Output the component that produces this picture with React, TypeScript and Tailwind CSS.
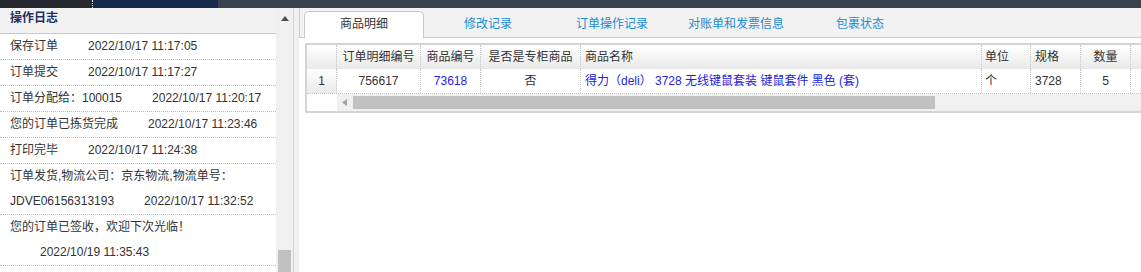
import React from "react";

const logs: { text: string; time: string }[] = [
  { text: "保存订单", time: "2022/10/17 11:17:05" },
  { text: "订单提交", time: "2022/10/17 11:17:27" },
  { text: "订单分配给：100015", time: "2022/10/17 11:20:17" },
  { text: "您的订单已拣货完成", time: "2022/10/17 11:23:46" },
  { text: "打印完毕", time: "2022/10/17 11:24:38" },
  { text: "订单发货,物流公司：京东物流,物流单号：JDVE06156313193", time: "2022/10/17 11:32:52" },
  { text: "您的订单已签收，欢迎下次光临！", time: "2022/10/19 11:35:43" },
];

const tabs = ["商品明细", "修改记录", "订单操作记录", "对账单和发票信息", "包裹状态"];

export default function App() {
  return (
    <div className="w-[1141px] h-[272px] overflow-hidden bg-white text-[12px] text-[#333] font-['Liberation_Sans','Noto_Sans_CJK_SC',sans-serif]">
      {/* top bar */}
      <div className="h-[8px] flex">
        <div className="w-[92px] bg-[#25282e]" />
        <div className="w-px border-l border-dotted border-[#d8dde6] bg-[#25282e]" />
        <div className="w-[125px] bg-[#172a4c]" />
        <div className="flex-1 bg-[#37424e]" />
      </div>

      <div className="flex h-[264px]">
        {/* left panel */}
        <div className="w-[276px] flex flex-col overflow-hidden">
          <div className="h-[26px] shrink-0 bg-[#f2f2f2] border-b border-[#cccccc] pl-[10px] leading-[21px] font-bold text-[#1d2f63]">
            操作日志
          </div>
          {logs.map((l, i) => (
            <div
              key={i}
              className="shrink-0 border-b border-dotted border-[#bdbdbd] pl-[10px] pr-[4px] leading-[25px]"
            >
              {l.text}
              <span className="inline-block whitespace-nowrap ml-[30px]">{l.time}</span>
            </div>
          ))}
        </div>

        {/* left scrollbar */}
        <div className="w-[17px] bg-[#f0f0f0] relative flex flex-col items-center">
          <svg width="8" height="5" viewBox="0 0 8 5" className="mt-[8px] ml-[1px]">
            <polygon points="4,0 8,5 0,5" fill="#505050" />
          </svg>
          <div className="absolute left-[2px] top-[242px] w-[13px] h-[30px] bg-[#c1c1c1]" />
        </div>

        {/* separator */}
        <div className="w-px bg-[#d4d4d4]" />
        <div className="w-[5px] bg-[#f0f0f0]" />

        {/* right panel */}
        <div className="flex-1 min-w-0 flex flex-col overflow-hidden">
          <div className="h-[30px] shrink-0 bg-[#f2f2f2] border-l border-b border-[#cccccc] flex items-end pl-[4px] gap-[4px]">
            {tabs.map((t, i) => (
              <div
                key={t}
                className={
                  i === 0
                    ? "w-[120px] h-[27px] -mb-px bg-white border border-b-0 border-[#c8c8c8] rounded-t-[5px] flex items-center justify-center text-[#333] pb-[2px]"
                    : "w-[120px] h-[27px] -mb-px flex items-center justify-center text-[#1a8cd3] pb-[2px]"
                }
              >
                {t}
              </div>
            ))}
          </div>

          <div className="pl-[6px] pt-[5px]">
            <div className="w-[900px] border-2 border-[#d4d4d4]">
              {/* header */}
              <div className="flex h-[24px] bg-gradient-to-b from-white to-[#e9e9e9] leading-[24px]">
                <div className="w-[30px] border-r border-dotted border-[#c4c4c4]" />
                <div className="w-[84px] border-r border-dotted border-[#c4c4c4] text-center">订单明细编号</div>
                <div className="w-[60px] border-r border-dotted border-[#c4c4c4] text-center">商品编号</div>
                <div className="w-[100px] border-r border-dotted border-[#c4c4c4] text-center">是否是专柜商品</div>
                <div className="w-[401px] border-r border-dotted border-[#c4c4c4] pl-[4px]">商品名称</div>
                <div className="w-[49px] border-r border-dotted border-[#c4c4c4] pl-[3px]">单位</div>
                <div className="w-[50px] border-r border-dotted border-[#c4c4c4] pl-[4px]">规格</div>
                <div className="w-[50px] border-r border-dotted border-[#c4c4c4] text-center">数量</div>
                <div className="flex-1" />
              </div>
              {/* data row */}
              <div className="flex h-[25px] border-b border-dotted border-[#c4c4c4] leading-[24px]">
                <div className="w-[30px] border-r border-dotted border-[#c4c4c4] text-center bg-gradient-to-b from-white to-[#eaeaea]">1</div>
                <div className="w-[84px] border-r border-dotted border-[#c4c4c4] text-center">756617</div>
                <div className="w-[60px] border-r border-dotted border-[#c4c4c4] text-center text-[#2323e0]">73618</div>
                <div className="w-[100px] border-r border-dotted border-[#c4c4c4] text-center">否</div>
                <div className="w-[401px] border-r border-dotted border-[#c4c4c4] pl-[4px] text-[#2323e0] whitespace-nowrap">
                  得力（deli） 3728 无线键鼠套装 键鼠套件 黑色 (套)
                </div>
                <div className="w-[49px] border-r border-dotted border-[#c4c4c4] pl-[3px]">个</div>
                <div className="w-[50px] border-r border-dotted border-[#c4c4c4] pl-[4px]">3728</div>
                <div className="w-[50px] border-r border-dotted border-[#c4c4c4] text-center">5</div>
                <div className="flex-1" />
              </div>
              {/* scroll row */}
              <div className="flex h-[17px]">
                <div className="w-[30px] bg-white" />
                <div className="flex-1 bg-[#f0f0f0] flex items-center">
                  <svg width="5" height="7" viewBox="0 0 5 7" className="ml-[5px]">
                    <polygon points="0,3.5 5,0 5,7" fill="#a3a3a3" />
                  </svg>
                  <div className="ml-[6px] w-[582px] h-[13px] bg-[#c1c1c1]" />
                </div>
              </div>
            </div>
          </div>
        </div>
      </div>
    </div>
  );
}
